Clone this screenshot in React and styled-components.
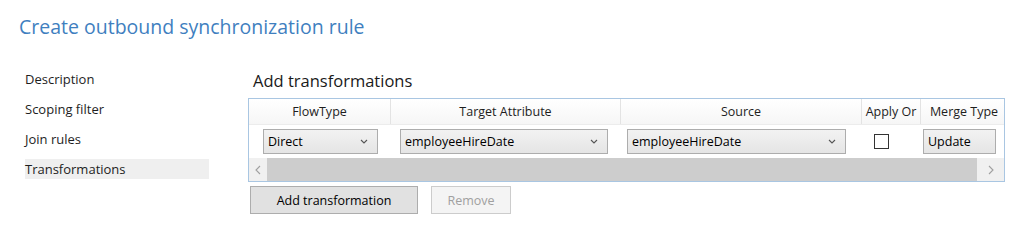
import styled, { createGlobalStyle } from "styled-components";

const GlobalStyle = createGlobalStyle`
  html, body {
    margin: 0;
    padding: 0;
    background: #ffffff;
    font-family: "Open Sans", "Noto Sans", sans-serif;
    color: #000;
  }
`;

const columns = [
  { title: "FlowType", width: 142 },
  { title: "Target Attribute", width: 230 },
  { title: "Source", width: 241 },
  { title: "Apply Or", width: 59 },
  { title: "Merge Type", width: 86 },
];

function Chevron() {
  return (
    <svg width="8" height="5" viewBox="0 0 8 5">
      <path d="M1 1 L4 4 L7 1" fill="none" stroke="#555" strokeWidth="1.1" />
    </svg>
  );
}

function Arrow({ dir }) {
  return (
    <svg width="6" height="10" viewBox="0 0 6 10">
      <path
        d={dir === "left" ? "M5 1 L1 5 L5 9" : "M1 1 L5 5 L1 9"}
        fill="none"
        stroke="#a0a0a0"
        strokeWidth="1.1"
      />
    </svg>
  );
}

function App() {
  return (
    <>
      <GlobalStyle />
      <Page>
        <Title>Create outbound synchronization rule</Title>
        <Body>
          <Nav>
            <NavItem>Description</NavItem>
            <NavItem>Scoping filter</NavItem>
            <NavItem>Join rules</NavItem>
            <NavItem $active>Transformations</NavItem>
          </Nav>
          <Main>
            <Heading>Add transformations</Heading>
            <Grid>
              <HeaderRow>
                {columns.map((c, i) => (
                  <HeaderCell key={c.title} $w={c.width} $last={i === columns.length - 1}>
                    {c.title}
                  </HeaderCell>
                ))}
              </HeaderRow>
              <DataRow>
                <Cell $w={142} $pad={14}>
                  <Select $w={115}>
                    <span>Direct</span>
                    <Chevron />
                  </Select>
                </Cell>
                <Cell $w={230} $pad={9}>
                  <Select $w={208}>
                    <span>employeeHireDate</span>
                    <Chevron />
                  </Select>
                </Cell>
                <Cell $w={241} $pad={6}>
                  <Select $w={219}>
                    <span>employeeHireDate</span>
                    <Chevron />
                  </Select>
                </Cell>
                <Cell $w={59} $pad={12}>
                  <Checkbox />
                </Cell>
                <Cell $w={86} $pad={2}>
                  <Select $w={73}>
                    <span>Update</span>
                  </Select>
                </Cell>
              </DataRow>
              <ScrollBar>
                <ScrollButton $w={18}>
                  <Arrow dir="left" />
                </ScrollButton>
                <Thumb />
                <ScrollButton $w={27}>
                  <Arrow dir="right" />
                </ScrollButton>
              </ScrollBar>
            </Grid>
            <Buttons>
              <Button $w={168}>Add transformation</Button>
              <Button $w={80} disabled>
                Remove
              </Button>
            </Buttons>
          </Main>
        </Body>
      </Page>
    </>
  );
}

export default App;

const Page = styled.div`
  width: 1024px;
  height: 243px;
  box-sizing: border-box;
  padding: 14px 0 0 19px;
  overflow: hidden;
`;

const Title = styled.h1`
  margin: 0;
  font-weight: 400;
  font-size: 19.5px;
  line-height: 26px;
  color: #3f7fbf;
`;

const Body = styled.div`
  display: flex;
  margin-top: 29px;
`;

const Nav = styled.nav`
  display: flex;
  flex-direction: column;
  gap: 10px;
  width: 184px;
  margin-left: 6px;
`;

const NavItem = styled.div`
  height: 20px;
  line-height: 20px;
  font-size: 13px;
  color: #1e1e1e;
  background: ${({ $active }) => ($active ? "#efefef" : "transparent")};
`;

const Main = styled.div`
  display: flex;
  flex-direction: column;
  margin-left: 39px;
`;

const Heading = styled.h2`
  margin: 0 0 0 5px;
  font-weight: 400;
  font-size: 16.5px;
  line-height: 24px;
  color: #1a1a1a;
`;

const Grid = styled.div`
  margin-top: 5px;
  width: 757px;
  border: 1px solid #a9c6e2;
  box-sizing: border-box;
  background: #fff;
  overflow: hidden;
`;

const HeaderRow = styled.div`
  display: flex;
  height: 26px;
  background: linear-gradient(#ffffff, #f6f6f6);
  border-bottom: 1px solid #ececec;
  box-sizing: border-box;
`;

const HeaderCell = styled.div`
  flex: none;
  width: ${({ $w }) => $w}px;
  box-sizing: border-box;
  display: flex;
  align-items: center;
  justify-content: center;
  font-size: 12.5px;
  color: #1e1e1e;
  border-right: ${({ $last }) => ($last ? "none" : "1px solid #e3e3e3")};
  white-space: nowrap;
`;

const DataRow = styled.div`
  display: flex;
  height: 33px;
  align-items: center;
`;

const Cell = styled.div`
  flex: none;
  width: ${({ $w }) => $w}px;
  box-sizing: border-box;
  padding-left: ${({ $pad }) => $pad}px;
  display: flex;
  align-items: center;
`;

const Select = styled.div`
  width: ${({ $w }) => $w}px;
  height: 25px;
  box-sizing: border-box;
  border: 1px solid #adadad;
  background: linear-gradient(#f2f2f2, #e5e5e5);
  display: flex;
  align-items: center;
  justify-content: space-between;
  padding: 0 9px 0 4px;
  font-size: 12.5px;
  color: #000;
  white-space: nowrap;
`;

const Checkbox = styled.div`
  width: 15px;
  height: 15px;
  box-sizing: border-box;
  border: 1px solid #333;
  background: #fff;
`;

const ScrollBar = styled.div`
  display: flex;
  height: 23px;
  background: #f0f0f0;
`;

const ScrollButton = styled.div`
  flex: none;
  width: ${({ $w }) => $w}px;
  display: flex;
  align-items: center;
  justify-content: center;
`;

const Thumb = styled.div`
  flex: 1;
  background: #cdcdcd;
`;

const Buttons = styled.div`
  display: flex;
  gap: 13px;
  margin: 4px 0 0 2px;
`;

const Button = styled.button`
  width: ${({ $w }) => $w}px;
  height: 28px;
  box-sizing: border-box;
  font-family: inherit;
  font-size: 12.5px;
  border: 1px solid ${({ disabled }) => (disabled ? "#cccccc" : "#adadad")};
  background: ${({ disabled }) => (disabled ? "#f4f4f4" : "#e1e1e1")};
  color: ${({ disabled }) => (disabled ? "#a0a0a0" : "#000")};
  padding: 0;
`;
